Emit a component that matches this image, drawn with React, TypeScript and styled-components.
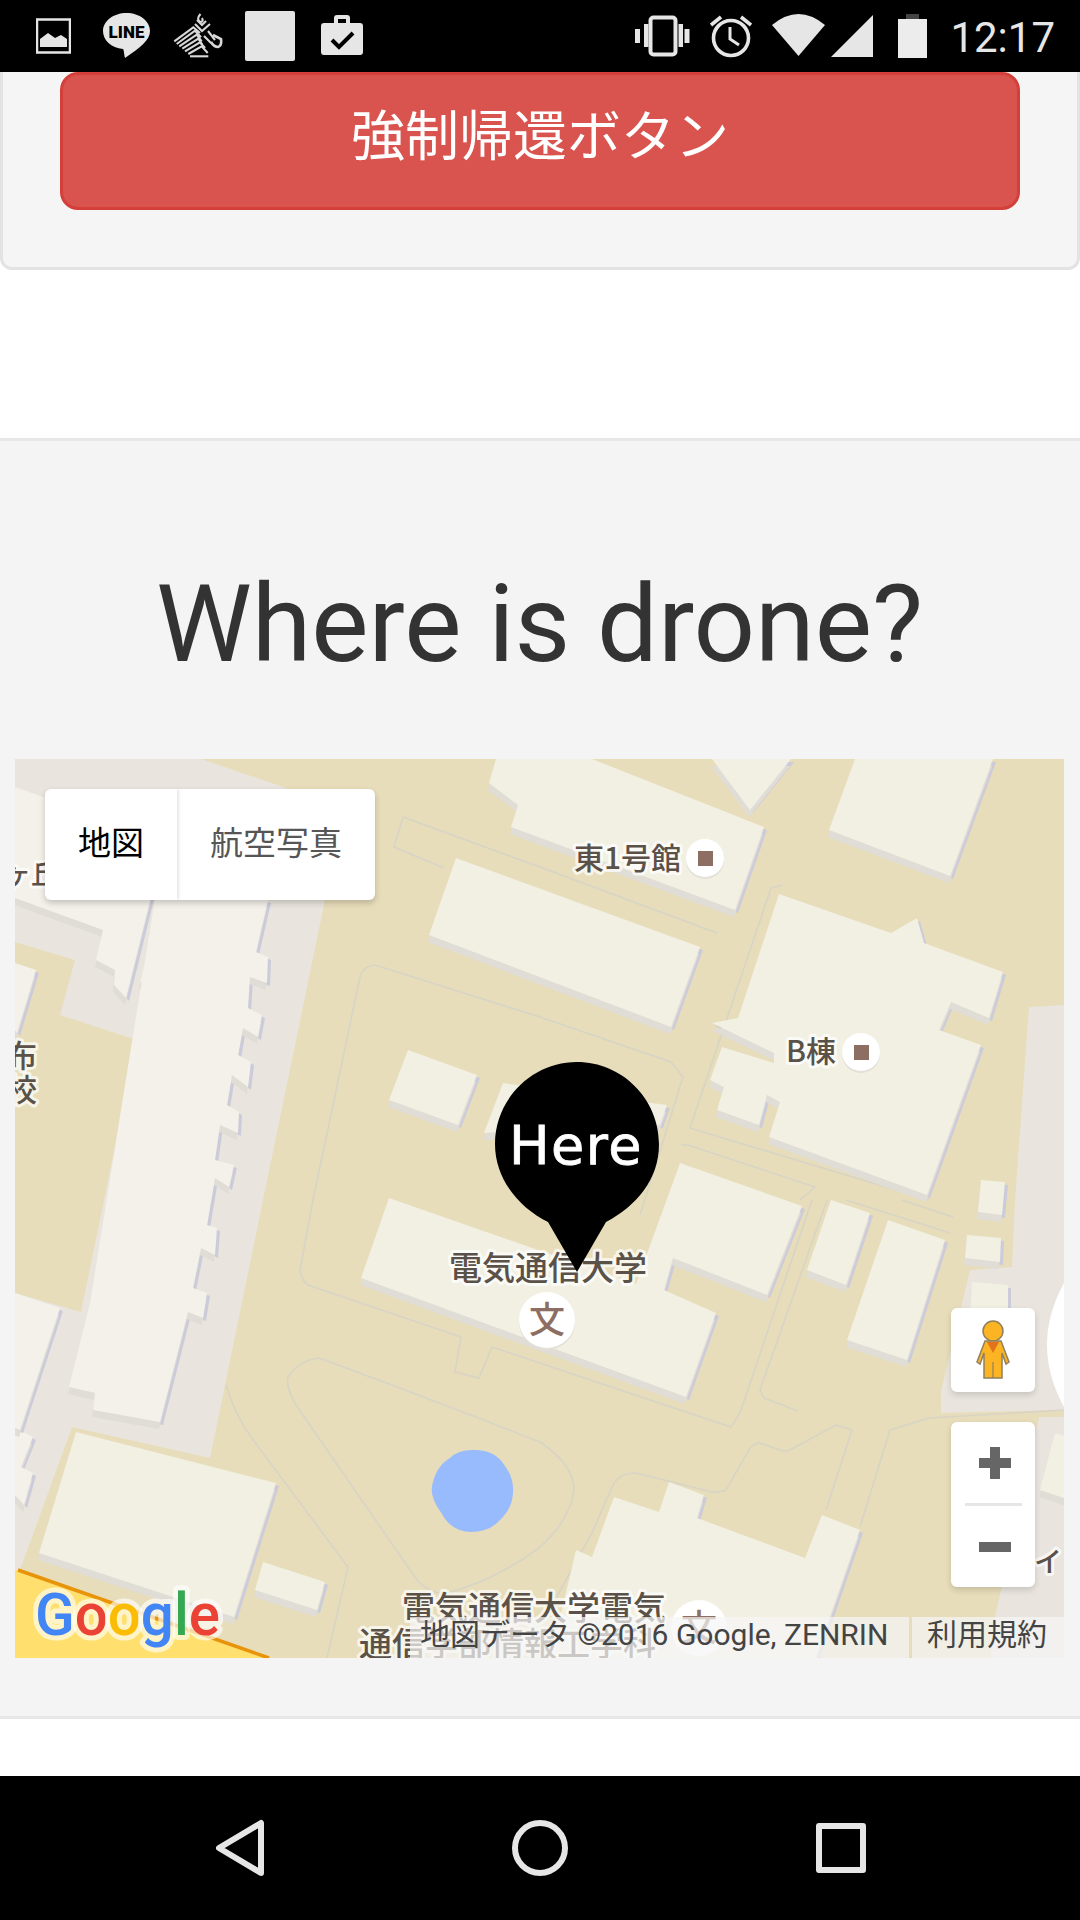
import React from "react";
import styled, { createGlobalStyle } from "styled-components";

const Global = createGlobalStyle`
  html, body { margin: 0; padding: 0; background: #fff; }
  #root { width: 1080px; height: 1920px; }
`;

const CJK = `Roboto, "Noto Sans CJK JP", sans-serif`;

const Page = styled.div`
  width: 1080px;
  height: 1920px;
  display: flex;
  flex-direction: column;
  overflow: hidden;
  background: #fff;
  font-family: ${CJK};
`;

const StatusBar = styled.header`
  flex: 0 0 72px;
  height: 72px;
  background: #000;
  display: flex;
  align-items: flex-start;
  padding-left: 36px;
`;

const StatusIcon = styled.svg<{ $ml?: number }>`
  display: block;
  height: 72px;
  flex: none;
  margin-left: ${(p) => p.$ml ?? 0}px;
  color: #e6e6e6;
`;

const Notification = styled.div<{ $ml: number }>`
  width: 50px;
  height: 50px;
  margin: 11px 0 0 ${(p) => p.$ml}px;
  background: #e4e4e4;
  border-radius: 2px;
`;

const Push = styled.div`
  flex: 1;
`;

const Clock = styled.span`
  margin: 14px 25px 0 23px;
  font: 400 42px/48px Roboto, sans-serif;
  color: #e6e6e6;
`;

const Well = styled.section`
  flex: none;
  width: 1080px;
  box-sizing: border-box;
  height: 198px;
  background: #f5f5f5;
  border: 3px solid #e3e3e3;
  border-top: 0;
  border-radius: 0 0 12px 12px;
  padding-left: 57px;
`;

const DangerButton = styled.button`
  display: flex;
  align-items: center;
  justify-content: center;
  box-sizing: border-box;
  width: 960px;
  height: 138px;
  padding: 0 0 6px;
  background: #d9534f;
  border: 3px solid #d43f3a;
  border-radius: 18px;
  color: #fff;
  font: 400 54px/1 ${CJK};
`;

const Gap = styled.div`
  flex: 0 0 168px;
`;

const MapSection = styled.section`
  flex: none;
  height: 1281px;
  box-sizing: border-box;
  background: #f4f4f4;
  border-top: 3px solid #e7e7e7;
  border-bottom: 3px solid #e7e7e7;
  padding: 124px 16px 0 15px;
`;

const Heading = styled.h1`
  margin: 0 0 76px;
  text-align: center;
  font: 400 108px/118px Roboto, sans-serif;
  color: #333;
`;

const MapFrame = styled.div`
  position: relative;
  width: 1049px;
  height: 899px;
  overflow: hidden;
  background: #e7ddba;
`;

const MapCanvas = styled.svg`
  display: block;
  width: 1049px;
  height: 899px;
`;

const Label = styled.text<{ $size?: number }>`
  font-family: "Noto Sans CJK JP", sans-serif;
  font-weight: 500;
  font-size: ${(p) => p.$size ?? 33}px;
  fill: #5a5148;
  stroke: rgba(255, 255, 255, 0.7);
  stroke-width: 6px;
  paint-order: stroke;
  stroke-linejoin: round;
`;

const PoiGlyph = styled.text`
  font-family: "Noto Sans CJK JP", sans-serif;
  font-weight: 500;
  font-size: 36px;
  fill: #8d6e63;
  text-anchor: middle;
`;

const PinText = styled.text`
  font-family: "DejaVu Sans", sans-serif;
  font-size: 54px;
  letter-spacing: 1.5px;
  fill: #fff;
  stroke: #fff;
  stroke-width: 0.8px;
  text-anchor: middle;
`;

const Logo = styled.text`
  font-family: Roboto, sans-serif;
  font-weight: 500;
  font-size: 59px;
  stroke: rgba(255, 255, 255, 0.62);
  stroke-width: 10px;
  paint-order: stroke;
  stroke-linejoin: round;
`;

const MapType = styled.div`
  position: absolute;
  left: 30px;
  top: 30px;
  display: flex;
  height: 111px;
  background: #fff;
  border-radius: 6px;
  box-shadow: 0 3px 6px rgba(0, 0, 0, 0.2);
  overflow: hidden;
`;

const MapTypeButton = styled.div<{ $active?: boolean }>`
  display: flex;
  align-items: center;
  justify-content: center;
  box-sizing: border-box;
  width: ${(p) => (p.$active ? 132 : 198)}px;
  padding-bottom: 2px;
  font: 400 33px/1 ${CJK};
  color: ${(p) => (p.$active ? "#000" : "#565656")};
  box-shadow: ${(p) => (p.$active ? "1px 0 4px rgba(0,0,0,0.14)" : "none")};
`;

const ControlCard = styled.div`
  position: absolute;
  right: 29px;
  width: 84px;
  background: #fff;
  border-radius: 6px;
  box-shadow: 0 3px 6px rgba(0, 0, 0, 0.15);
  display: flex;
  flex-direction: column;
  align-items: center;
`;

const PegmanCard = styled(ControlCard)`
  top: 549px;
  height: 84px;
  justify-content: center;
`;

const ZoomCard = styled(ControlCard)`
  top: 663px;
  height: 165px;
`;

const ZoomButton = styled.div`
  flex: 1;
  display: flex;
  align-items: center;
  justify-content: center;
  padding-left: 4px;
`;

const ZoomDivider = styled.div`
  width: 57px;
  height: 3px;
  flex: none;
  background: #e6e6e6;
`;

const Attribution = styled.div`
  position: absolute;
  right: 0;
  bottom: 0;
  height: 41px;
  display: flex;
  gap: 3px;
`;

const AttributionCell = styled.div<{ $w: number; $pl: number }>`
  width: ${(p) => p.$w}px;
  box-sizing: border-box;
  padding: 0 0 6px ${(p) => p.$pl}px;
  background: rgba(245, 245, 245, 0.72);
  font: 400 30px/35px ${CJK};
  color: #444;
  white-space: nowrap;
`;

const WhiteGap = styled.div`
  flex: 1;
`;

const NavBar = styled.nav`
  flex: 0 0 144px;
  height: 144px;
  background: #000;
  display: flex;
  align-items: flex-start;
  padding-left: 216px;
`;

const NavIcon = styled.svg<{ $ml?: number }>`
  display: block;
  height: 144px;
  flex: none;
  margin-left: ${(p) => p.$ml ?? 0}px;
`;

const buildings = [
  "855,759 993,759 950,876 829,830",
  "496,759 592,759 764,827 735,910 511,827 518,805 489,783",
  "712,759 791,759 750,810",
  "456,858 700,947 671,1027 429,935",
  "779,894 891,933 917,918 924,943 1003,972 989,1018 951,1002 939,1030 981,1045 927,1195 769,1137 780,1102 767,1095 759,1125 717,1110 724,1087 710,1080 722,1047 774,1063 774,1053 712,1023 738,1018",
  "408,1050 477,1075 458,1125 389,1100",
  "503,1083 667,1105 660,1125 484,1133",
  "389,1198 636,1284 680,1163 802,1206 767,1295 673,1258 664,1290 716,1313 686,1397 361,1278",
  "831,1200 870,1213 846,1285 807,1270",
  "888,1220 945,1240 907,1360 847,1340",
  "981,1180 1005,1182 1002,1215 978,1212",
  "967,1235 1001,1238 1000,1262 965,1258",
  "972,1282 1008,1285 1008,1310 970,1310",
  "76,1432 276,1483 234,1617 39,1553",
  "263,1562 325,1582 317,1610 255,1590",
  "614,1497 659,1512 669,1482 704,1495 697,1518 805,1558 822,1515 860,1530 815,1660 550,1660 576,1550 592,1557",
  "1055,1433 1070,1438 1070,1500 1040,1490",
];

const dormitories = [
  "15,1428 33,1437 21,1467 33,1473 24,1505 15,1495",
  "15,1293 60,1308 20,1430 15,1428",
  "15,963 36,970 17,1033 15,1030",
  "15,787 165,840 126,998 114,985 115,970 96,960 103,930 15,898",
  "145,963 165,968 158,988 140,982",
  "158,880 268,900 256,952 268,957 267,983 250,977 248,1008 262,1015 258,1037 243,1028 238,1055 251,1062 248,1087 232,1075 227,1105 239,1112 238,1133 220,1125 215,1160 234,1165 229,1187 215,1178 207,1225 217,1228 215,1255 201,1248 193,1288 207,1293 203,1318 188,1312 160,1422 93,1410 95,1393 69,1387 90,1303",
];

const paths = [
  "M360 977 Q363 966 375 965 L540 1017 L671 1062 L683 1077 L640 1215",
  "M360 977 L313 1200 L300 1270 Q302 1281 308 1285 L461 1337 L455 1372 L479 1378 L492 1347 L731 1427 L740 1413 L812 1200",
  "M771 888 L783 885 M771 888 L690 1128 L929 1200",
  "M403 817 L394 847 L444 868 M403 817 L540 867 L717 933",
  "M827 1200 L760 1390 L764 1398 L798 1411",
  "M681 1145 L688 1145 L815 1187 L800 1200",
  "M319 1358 Q420 1395 540 1442 Q574 1465 574 1490 Q570 1520 540 1547 Q500 1578 448 1593 Q430 1595 417 1580 L296 1405 Q285 1385 288 1377 Q300 1360 319 1358",
  "M226 1385 Q235 1415 251 1437 L348 1567 L327 1658",
  "M592 1533 L612 1487 Q618 1473 636 1473 L712 1492 Q722 1492 726 1490 L750 1448 Q755 1443 760 1443 L780 1450 Q785 1452 790 1450 L836 1425 L852 1430 L826 1510",
  "M860 1527 L890 1430 L929 1418 L1064 1410",
  "M902 1200 L953 1217 M846 1200 L950 1233",
  "M592 1533 L555 1600",
];

const Building = ({ pts, fill }: { pts: string; fill: string }) => (
  <g>
    <polygon points={pts} fill="#cccbda" transform="translate(3 3)" />
    <polygon points={pts} fill="#e0ddd6" transform="translate(-1 7)" />
    <polygon points={pts} fill={fill} />
  </g>
);

const Poi = ({ x, y, r }: { x: number; y: number; r: number }) => (
  <>
    <circle cx={x} cy={y + 2} r={r} fill="#e3e0d8" />
    <circle cx={x} cy={y} r={r} fill="#fff" />
  </>
);

const AppMap = () => (
  <MapCanvas viewBox="15 759 1049 899">
    <rect x="15" y="759" width="1049" height="899" fill="#e7ddba" />
    <polygon
      points="15,759 201,759 286,788 325,900 263,1200 210,1458 72,1427 20,1570 15,1570 15,1293 81,1312 137,1040 60,1015 75,960 15,942"
      fill="#e9e5de"
    />
    <polygon
      points="1029,1007 1064,1005 1064,1410 941,1413 941,1392 970,1270 1012,1267 1015,1200"
      fill="#e9e5de"
    />
    <polygon points="1039,1417 1064,1417 1064,1658 990,1658 995,1617" fill="#e9e5de" />
    <path d="M1064 1283 Q1030 1345 1064 1407 Z" fill="#fff" />
    <polygon points="15,1570 20,1571 269,1658 15,1658" fill="#ffe06f" />
    <path d="M18 1570 L269 1658" stroke="#e8940a" strokeWidth="3.5" fill="none" />
    {paths.map((d) => (
      <path key={d} d={d} fill="none" stroke="#d8d4c6" strokeWidth="1.6" />
    ))}
    <path
      d="M472 1450 Q495 1449 505 1466 Q514 1478 513 1493 Q512 1510 498 1522 Q488 1532 470 1532 Q451 1531 442 1514 Q430 1498 432 1486 Q436 1466 450 1458 Q458 1450 472 1450 Z"
      fill="#98bbfd"
    />
    {buildings.map((pts) => (
      <Building key={pts} pts={pts} fill="#f2efe3" />
    ))}
    {dormitories.map((pts) => (
      <Building key={pts} pts={pts} fill="#f3f1ea" />
    ))}

    <Label x="574" y="869" $size={30}>東1号館</Label>
    <Poi x={705} y={858} r={19} />
    <rect x="698" y="851" width="15" height="15" fill="#8d6e63" />

    <Label x="786" y="1062" $size={30}>B棟</Label>
    <Poi x={861} y={1052} r={19} />
    <rect x="854" y="1045" width="15" height="15" fill="#8d6e63" />

    <Label x="4" y="884" $size={27}>ヶ丘</Label>
    <Label x="6" y="1067" $size={31}>布</Label>
    <Label x="6" y="1101" $size={31}>校</Label>
    <Label x="1034" y="1572" $size={28}>イ</Label>

    <Label x="449" y="1280">電気通信大学</Label>
    <Poi x={547} y={1320} r={28} />
    <PoiGlyph x="547" y="1333">文</PoiGlyph>

    <Label x="402" y="1620">電気通信大学電気</Label>
    <Label x="359" y="1656">通信学部情報工学科</Label>
    <circle cx="699" cy="1628" r="28" fill="#fff" />
    <PoiGlyph x="699" y="1641">文</PoiGlyph>

    <path
      d="M577 1062 C532 1062 495 1099 495 1144 C495 1180 520 1208 548 1222 L577 1272 L606 1222 C636 1206 659 1180 659 1144 C659 1099 622 1062 577 1062 Z"
      fill="#000"
    />
    <PinText x="576" y="1164">Here</PinText>

    <Logo x="35" y="1635" textLength="185" lengthAdjust="spacingAndGlyphs">
      <tspan fill="#4285f4">G</tspan>
      <tspan fill="#ea4335">o</tspan>
      <tspan fill="#fbbc05">o</tspan>
      <tspan fill="#4285f4">g</tspan>
      <tspan fill="#34a853">l</tspan>
      <tspan fill="#ea4335">e</tspan>
    </Logo>
  </MapCanvas>
);

const App = () => (
  <Page>
    <Global />
    <StatusBar>
      <StatusIcon width="35" viewBox="0 0 35 72">
        <rect x="1" y="19.500" width="33" height="33" fill="none" stroke="currentColor" strokeWidth="2.500" />
        <path d="M4 47 V39 L12 33 L19 38 L25 35 L31 39 V47 Z" fill="currentColor" />
      </StatusIcon>
      <StatusIcon $ml={32} width="47" viewBox="0 0 47 72">
        <path
          d="M23.500 13 C36.500 13 47 21 47 31 C47 40 38 47 22 58 C21 54 21 50 20 49 C8 48 0 40 0 31 C0 21 10.500 13 23.500 13 Z"
          fill="currentColor"
        />
        <text x="23.500" y="38" textAnchor="middle" fontFamily="Roboto, sans-serif" fontWeight="900" fontSize="17" fill="#000">LINE</text>
      </StatusIcon>
      <StatusIcon $ml={23} width="50" viewBox="0 0 50 72" fill="none" stroke="#d8d8d8" strokeWidth="2.100">
        <path d="M1.300 41.300 L20.300 27.300 L27 33" />
        <path d="M3.700 44 L22 30.700 L28 37.300" />
        <path d="M6.300 46.300 L23.700 34.700 L28.700 41.300" />
        <path d="M9.300 48.700 L25.300 38.700 L29.300 44.700" />
        <path d="M12 51.300 L27 42.300 L32 48" />
        <path d="M15.300 54 L28.700 46.300 L34.700 53" />
        <path d="M17 56.300 H35.300" />
        <path d="M22 24 L29 31 L37 24" />
        <path d="M24 20 L29 25 L33 21" />
        <path d="M27.500 14 Q23 19 27 22 Q31 22 29 18" />
        <path d="M31 36 L38 43" />
        <path d="M35 31 L42 40" />
        <path d="M40 35 L48 39 Q49 46 45 47 Q41 47 38 42" strokeWidth="2.600" />
      </StatusIcon>
      <Notification $ml={22} />
      <StatusIcon $ml={26} width="42" viewBox="0 0 42 72">
        <path
          fillRule="evenodd"
          d="M3 23 H13 V18 Q13 15 16 15 H26 Q29 15 29 18 V23 H39 Q42 23 42 26 V52 Q42 55 39 55 H3 Q0 55 0 52 V26 Q0 23 3 23 Z M17 19 V23 H25 V19 Z"
          fill="currentColor"
        />
        <path d="M11 40 L18 47 L32 33" fill="none" stroke="#000" strokeWidth="4" />
      </StatusIcon>
      <Push />
      <StatusIcon width="55" viewBox="0 0 55 72" fill="currentColor">
        <rect x="15.500" y="17.500" width="25" height="37" rx="3" fill="none" stroke="currentColor" strokeWidth="4" />
        <rect x="0" y="29" width="5" height="14" />
        <rect x="9" y="24" width="4.500" height="23" />
        <rect x="43.500" y="24" width="4.500" height="23" />
        <rect x="49.500" y="29" width="5" height="14" />
      </StatusIcon>
      <StatusIcon $ml={20} width="42" viewBox="0 0 42 72" fill="none" stroke="currentColor" strokeWidth="3.600">
        <circle cx="21" cy="38" r="17.500" />
        <path d="M20 27 V39 L29 45" strokeWidth="3" />
        <path d="M1 25 L11 17" />
        <path d="M41 25 L31 17" />
      </StatusIcon>
      <StatusIcon $ml={20} width="53" viewBox="0 0 53 72">
        <path d="M0 25 Q26.500 3 53 25 L26.500 56 Z" fill="currentColor" />
      </StatusIcon>
      <StatusIcon $ml={6} width="42" viewBox="0 0 42 72">
        <path d="M42 15 V57 H0 Z" fill="currentColor" />
      </StatusIcon>
      <StatusIcon $ml={25} width="29" viewBox="0 0 29 72">
        <rect x="8" y="14" width="13" height="5" fill="#444" />
        <rect x="0" y="19" width="29" height="39" fill="#ececec" />
      </StatusIcon>
      <Clock>12:17</Clock>
    </StatusBar>

    <Well>
      <DangerButton>強制帰還ボタン</DangerButton>
    </Well>

    <Gap />

    <MapSection>
      <Heading>Where is drone?</Heading>
      <MapFrame>
        <AppMap />
        <MapType>
          <MapTypeButton $active>地図</MapTypeButton>
          <MapTypeButton>航空写真</MapTypeButton>
        </MapType>
        <PegmanCard>
          <svg width="34" height="60" viewBox="0 0 34 60">
            <circle cx="17" cy="11" r="10" fill="#fcb423" stroke="#8f8060" strokeWidth="1.500" />
            <path
              d="M9 21 H25 L33 42 L30 44 L26 33 V58 H8 V33 L4 44 L1 42 Z"
              fill="#fcb423"
              stroke="#8f8060"
              strokeWidth="1.500"
            />
            <path d="M17 42 V58" stroke="#8f8060" strokeWidth="1.200" />
            <path d="M11 22 H23 L17 33 Z" fill="#e0731c" />
          </svg>
        </PegmanCard>
        <ZoomCard>
          <ZoomButton>
            <svg width="32" height="32" viewBox="0 0 32 32">
              <path d="M11 0 H21 V11 H32 V21 H21 V32 H11 V21 H0 V11 H11 Z" fill="#666" />
            </svg>
          </ZoomButton>
          <ZoomDivider />
          <ZoomButton>
            <svg width="32" height="10" viewBox="0 0 32 10">
              <rect width="32" height="10" fill="#666" />
            </svg>
          </ZoomButton>
        </ZoomCard>
        <Attribution>
          <AttributionCell $w={499} $pl={10}>地図データ ©2016 Google, ZENRIN</AttributionCell>
          <AttributionCell $w={152} $pl={15}>利用規約</AttributionCell>
        </Attribution>
      </MapFrame>
    </MapSection>

    <WhiteGap />

    <NavBar>
      <NavIcon width="50" viewBox="0 0 50 144" fill="none" stroke="#e6e6e6" strokeWidth="6" strokeLinejoin="round">
        <path d="M45 47 V97 L3 72 Z" />
      </NavIcon>
      <NavIcon $ml={245} width="58" viewBox="0 0 58 144" fill="none" stroke="#e6e6e6" strokeWidth="6">
        <circle cx="29" cy="72" r="25" />
      </NavIcon>
      <NavIcon $ml={247} width="50" viewBox="0 0 50 144" fill="none" stroke="#e6e6e6" strokeWidth="6" strokeLinejoin="round">
        <rect x="3" y="50" width="44" height="44" />
      </NavIcon>
    </NavBar>
  </Page>
);

export default App;
